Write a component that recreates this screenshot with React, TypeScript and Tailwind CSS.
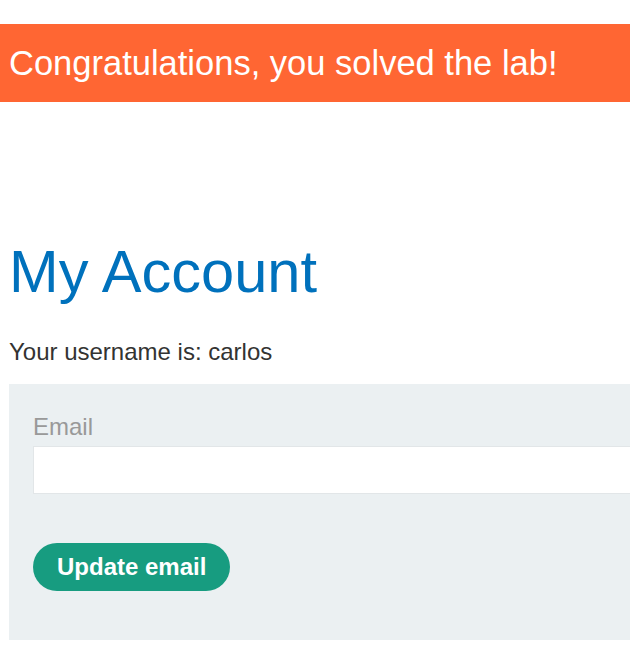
export default function App() {
  return (
    <div
      className="w-[630px] h-[646px] overflow-hidden bg-white pt-[24px]"
      style={{ fontFamily: '"Liberation Sans", Arial, sans-serif' }}
    >
      <div className="h-[78px] w-full bg-[#ff6633] flex items-center pl-[9px] text-white text-[34.5px] leading-none">
        Congratulations, you solved the lab!
      </div>
      <h1 className="mt-[140px] ml-[9px] text-[59.6px] leading-[60px] text-[#0071bc] font-normal">
        My Account
      </h1>
      <p className="mt-[38px] ml-[9px] text-[24px] leading-[24px] text-[#333332]">
        Your username is: carlos
      </p>
      <div className="mt-[20px] ml-[9px] w-[700px] bg-[#ebf0f2] pl-[24px] pt-[31px] pb-[49px]">
        <label className="block text-[24px] leading-[24px] text-[#999999]">Email</label>
        <input
          className="block mt-[7px] h-[48px] w-[660px] bg-white border border-[#e2e6e8] outline-none"
          type="email"
        />
        <button className="mt-[49px] h-[48px] px-[24px] rounded-full bg-[#179c80] text-white text-[24px] font-bold leading-none">
          Update email
        </button>
      </div>
    </div>
  );
}
